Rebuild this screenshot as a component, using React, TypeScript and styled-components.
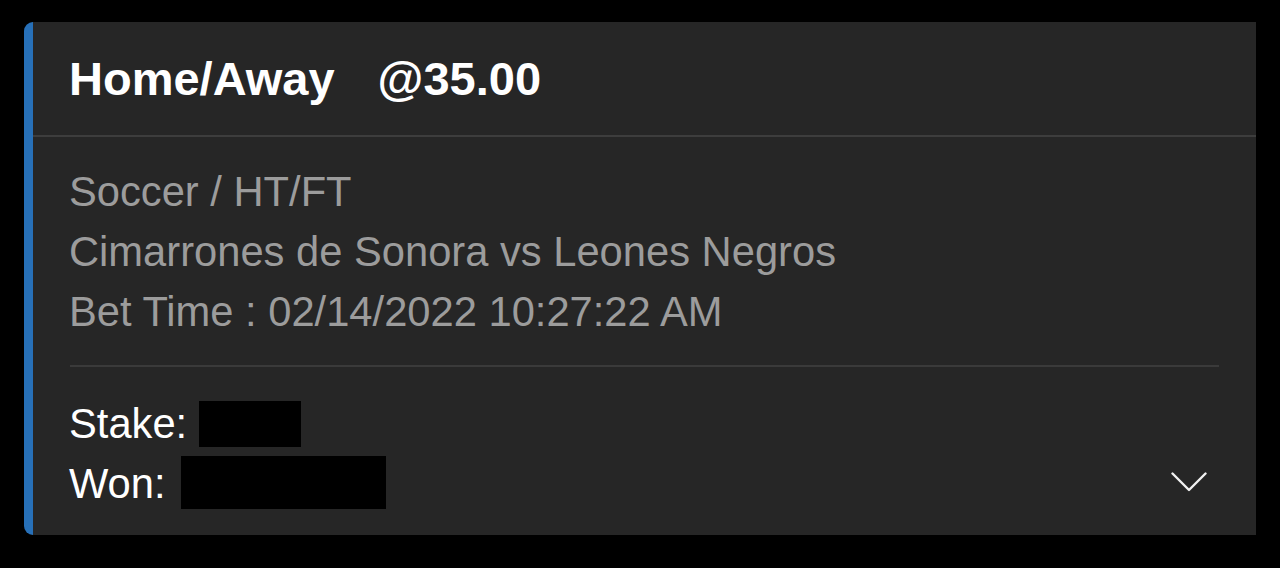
import React from "react";
import styled, { createGlobalStyle } from "styled-components";

const GlobalStyle = createGlobalStyle`
  html, body {
    margin: 0;
    padding: 0;
    background: #000;
  }
  body {
    font-family: "Liberation Sans", Arial, Helvetica, sans-serif;
    -webkit-font-smoothing: antialiased;
  }
`;

const Page = styled.div`
  width: 1280px;
  height: 568px;
  padding: 22px 24px 0 24px;
  box-sizing: border-box;
  background: #000;
`;

const Card = styled.div`
  width: 1232px;
  height: 513px;
  box-sizing: border-box;
  background: #262626;
  border-left: 9px solid #2770b8;
  border-radius: 9px 0 0 9px;
  display: flex;
  flex-direction: column;
`;

const Header = styled.div`
  height: 114px;
  display: flex;
  align-items: center;
  gap: 43px;
  padding-left: 36px;
  border-bottom: 2px solid #3d3d3d;
  color: #fff;
  font-size: 47px;
  font-weight: 700;
`;

const Body = styled.div`
  flex: 1;
  display: flex;
  flex-direction: column;
  padding: 25px 36px 21px 36px;
`;

const InfoLine = styled.div`
  color: #9c9c9c;
  font-size: 41.7px;
  line-height: 60px;
  white-space: nowrap;
`;

const Divider = styled.div`
  height: 2px;
  background: #3a3a3a;
  margin: 23px 1px 27px 1px;
`;

const Footer = styled.div`
  display: flex;
  justify-content: space-between;
  align-items: flex-end;
`;

const Amounts = styled.div`
  display: flex;
  flex-direction: column;
`;

const AmountLine = styled.div`
  color: #fff;
  font-size: 41.7px;
  line-height: 60px;
  height: 60px;
  display: flex;
  align-items: center;
  white-space: nowrap;
`;

const Redacted = styled.span<{ $w: number; $h: number; $gap: number; $lift: number }>`
  display: inline-block;
  width: ${(p) => p.$w}px;
  height: ${(p) => p.$h}px;
  margin-left: ${(p) => p.$gap}px;
  margin-bottom: ${(p) => p.$lift}px;
  background: #000;
`;

const Toggle = styled.button`
  border: 0;
  background: transparent;
  padding: 0;
  margin: 0 13px 22px 0;
  width: 36px;
  height: 20px;
  display: flex;
  align-items: center;
  justify-content: center;
  cursor: pointer;
`;

const Chevron = () => (
  <svg width="36" height="20" viewBox="0 0 36 20" fill="none">
    <polyline
      points="1.5,1.5 18,18 34.5,1.5"
      stroke="#f2f2f2"
      strokeWidth="2.4"
      strokeLinecap="round"
      strokeLinejoin="round"
    />
  </svg>
);

const App: React.FC = () => {
  return (
    <>
      <GlobalStyle />
      <Page>
        <Card>
          <Header>
            <span>Home/Away</span>
            <span>@35.00</span>
          </Header>
          <Body>
            <InfoLine>Soccer / HT/FT</InfoLine>
            <InfoLine>Cimarrones de Sonora vs Leones Negros</InfoLine>
            <InfoLine>Bet Time : 02/14/2022 10:27:22 AM</InfoLine>
            <Divider />
            <Footer>
              <Amounts>
                <AmountLine>
                  Stake:
                  <Redacted $w={102} $h={46} $gap={12} $lift={0} />
                </AmountLine>
                <AmountLine>
                  Won:
                  <Redacted $w={205} $h={53} $gap={15} $lift={3} />
                </AmountLine>
              </Amounts>
              <Toggle aria-label="Expand">
                <Chevron />
              </Toggle>
            </Footer>
          </Body>
        </Card>
      </Page>
    </>
  );
};

export default App;
